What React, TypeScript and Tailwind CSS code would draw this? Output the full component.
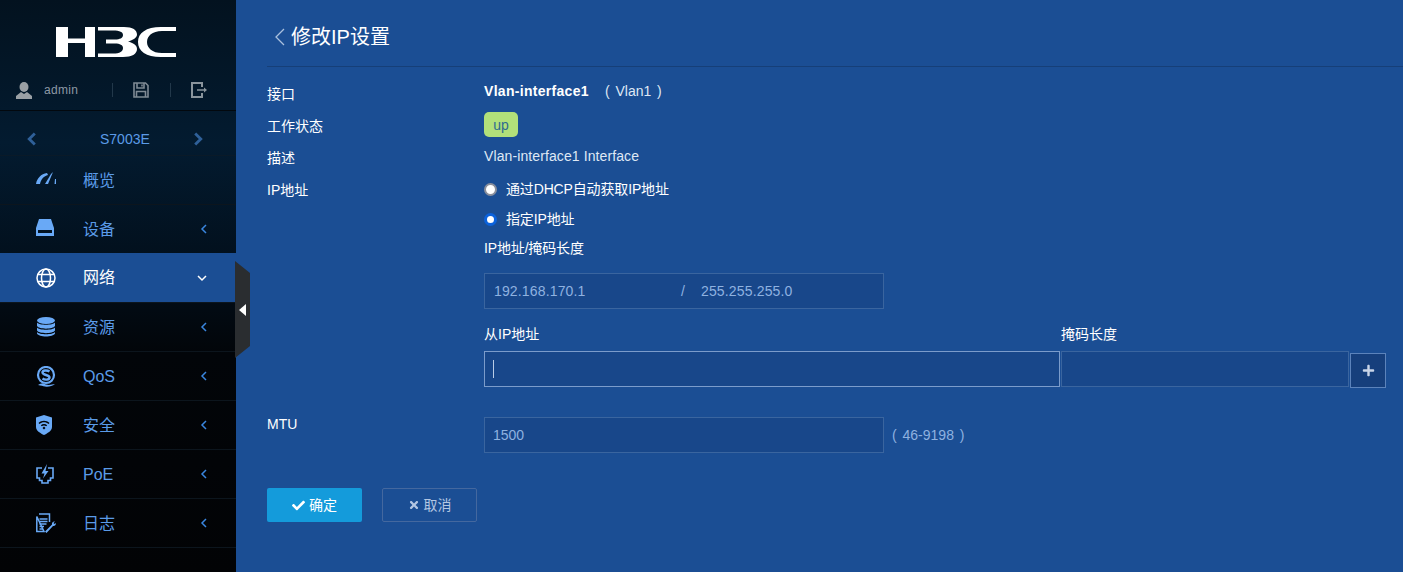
import React from 'react';
import { FaCheck, FaPlus, FaTimes } from 'react-icons/fa';

const font = { fontFamily: '"Liberation Sans", "Noto Sans CJK SC", sans-serif' };

const Gauge = () => (
  <svg className="mb-1" width="21" height="14" viewBox="0 0 21 14" fill="#69a9f6">
    <path d="M0 13 C1 7 5 3 11 2 L12 4 C8 5 5 8 4 13 Z" />
    <path d="M9 13 L15 3 L17 1 L12 13 Z" />
    <path d="M19 8 L20 8 L20 13 L18.500 13 Z" />
  </svg>
);

const Drive = () => (
  <svg className="mb-1" width="18" height="17" viewBox="0 0 18 17" fill="#69a9f6">
    <path fillRule="evenodd" d="M3 0 H15 L18 9 V17 H0 V9 Z M2 11 V14 H16 V11 Z" />
  </svg>
);

const Globe = () => (
  <svg width="20" height="20" viewBox="0 0 20 20" fill="none" stroke="currentColor" strokeWidth="1.500">
    <circle cx="10" cy="10" r="9" />
    <ellipse cx="10" cy="10" rx="4.500" ry="9" />
    <path d="M2 6.500 H18 M2 13.500 H18" />
  </svg>
);

const Database = () => (
  <svg width="20" height="20" viewBox="0 0 20 20" fill="#69a9f6">
    <ellipse cx="10" cy="3.500" rx="9" ry="3.500" />
    <path d="M1 5.500 C3 8.500 17 8.500 19 5.500 V9 C17 12.500 3 12.500 1 9 Z" />
    <path d="M1 10.500 C3 13.500 17 13.500 19 10.500 V13.500 C17 17 3 17 1 13.500 Z" />
    <path d="M1 15 C3 18 17 18 19 15 V16.500 C17 20.500 3 20.500 1 16.500 Z" />
  </svg>
);

const QosIcon = () => (
  <svg width="20" height="21" viewBox="0 0 20 21" fill="none" stroke="#69a9f6">
    <circle cx="10" cy="9" r="8" strokeWidth="2.200" />
    <path d="M13.500 5.500 C11 3.800 6.500 4.200 6.500 6.500 C6.500 9.300 13.500 8.700 13.500 11.500 C13.500 14 9 14.300 6.500 12.500" strokeWidth="2.400" />
    <path d="M2 19 C6 16.500 8 17.500 10 18.500 C13 19.500 16 18.500 19 18 C16 20.500 12 21 9 20.500 C7 20 5 19.500 2 19 Z" fill="#69a9f6" stroke="none" />
  </svg>
);

const Shield = () => (
  <svg width="16" height="20" viewBox="0 0 16 20" fill="#69a9f6">
    <path fillRule="evenodd" d="M8 0 L16 2.500 V12 C16 16 11 18.500 8 20 C5 18.500 0 16 0 12 V2.500 Z M2.500 8 C5.500 5 10.500 5 13.500 8 L12.500 9 C10 6.800 6 6.800 3.500 9 Z M4.800 10.300 C6.500 8.700 9.500 8.700 11.200 10.300 L10.200 11.300 C9 10.300 7 10.300 5.800 11.300 Z M8 11.500 L9.500 13 L8 14.500 L6.500 13 Z" />
  </svg>
);

const Poe = () => (
  <svg width="18" height="20" viewBox="0 0 18 20" fill="none" stroke="#69a9f6" strokeWidth="1.600">
    <path d="M6 4 H1 V14 H3.500 V16.500 H6 V19 H12 V16.500 H14.500 V14 H17 V4 H12" />
    <path d="M11 0 L5.500 9.500 H8.500 L7 14.500 L12.500 7 H9.500 Z" fill="#69a9f6" stroke="none" />
  </svg>
);

const LogIcon = () => (
  <svg width="20" height="20" viewBox="0 0 20 20" fill="none" stroke="#69a9f6">
    <path d="M3 1 H13.500 V9 M8 18.500 H0.800 V3.500 Z" strokeWidth="1.500" />
    <path d="M3.500 6 H11.500 M3.500 8.500 H11.500 M3.500 11 H10.500 M3.500 13.500 H8 M3.500 16 H7" strokeWidth="1.400" />
    <path d="M9 18.500 L16 11.500 C15.500 10 17 8 19 8.500 L17.500 10 L18.500 11 L20 10 C20 12 18.500 13.500 17 13 L10.500 20 Z" fill="#69a9f6" stroke="none" />
  </svg>
);

const Logo = () => (
  <svg width="120" height="30" viewBox="0 0 120 30" fill="#fff">
    <path d="M0 0 H12 V11.500 H29 V0 H39 V30 H29 V16 H12 V30 H0 Z" />
    <path d="M42 0 H68 C77 0 81 3 81 7.500 C81 11 77 13 72 14.500 C77 16 81 18 81 22 C81 27 76 30 67 30 H42 V26.500 H57 C64 26.500 67 24.500 67 21 C67 18 64 16.500 59 16.500 H50 V12.500 H59 C64 12.500 67 11 67 8 C67 5 64 3.500 57 3.500 H42 Z" />
    <path d="M120 0 V4 H106 C96 4 91 9 91 15 C91 21 96 26 106 26 H120 V30 H105 C90 30 82 24 82 15 C82 6 90 0 105 0 Z" />
  </svg>
);

const Person = () => (
  <svg width="16" height="17" viewBox="0 0 16 17" fill="#9aa0a5">
    <ellipse cx="8" cy="5" rx="4.500" ry="5" />
    <path d="M5 10 L0 14 V17 H16 V14 L11 10 L8 12 Z" />
  </svg>
);

const Save = () => (
  <svg width="16" height="16" viewBox="0 0 16 16" fill="none" stroke="#7f8a94" strokeWidth="1.600">
    <path d="M1 1 H12.500 L15 3.500 V15 H1 Z" />
    <path d="M4 1 V6 H11 V1 M9 2.500 V4.500 M3.500 15 V9.500 H12.500 V15" />
  </svg>
);

const Logout = () => (
  <svg width="16" height="16" viewBox="0 0 16 16" fill="none" stroke="#8a949c" strokeWidth="2">
    <path d="M11 5 V1 H1 V15 H11 V11" />
    <path d="M6 8 H14" strokeWidth="1.500" />
    <path d="M13 5.500 L16 8 L13 10.500 Z" fill="#8a949c" stroke="none" />
  </svg>
);

const Chevron = ({ dir, size = 10, color, width = 1.500 }: { dir: 'left' | 'right' | 'down'; size?: number; color: string; width?: number }) => {
  const d = dir === 'left' ? 'M7 1 L3 5 L7 9' : dir === 'right' ? 'M3 1 L7 5 L3 9' : 'M1 3 L5 7 L9 3';
  return (
    <svg width={size} height={size} viewBox="0 0 10 10" fill="none" stroke={color} strokeWidth={width}>
      <path d={d} />
    </svg>
  );
};

const menu = [
  { label: '概览', icon: <Gauge />, arrow: false },
  { label: '设备', icon: <Drive />, arrow: true },
  { label: '网络', icon: <Globe />, arrow: true, active: true },
  { label: '资源', icon: <Database />, arrow: true },
  { label: 'QoS', icon: <QosIcon />, arrow: true },
  { label: '安全', icon: <Shield />, arrow: true },
  { label: 'PoE', icon: <Poe />, arrow: true },
  { label: '日志', icon: <LogIcon />, arrow: true },
];

const Sidebar = () => (
  <aside className="relative w-[236px] shrink-0 bg-[linear-gradient(180deg,#03121f_0%,#031b30_25%,#02101d_45%,#020509_62%,#020305_100%)]">
    <div className="flex h-[111px] flex-col border-b border-[#02080e]">
      <div className="flex h-[72px] items-start pt-[27px] pl-[56px]">
        <Logo />
      </div>
      <div className="flex h-[36px] items-center pl-4">
        <Person />
        <span className="ml-[12px] w-[68px] text-xs tracking-[0.3px] text-[#8d99a5]">admin</span>
        <span className="h-[14px] w-px bg-[#22384a]" />
        <span className="ml-5"><Save /></span>
        <span className="ml-[21px] h-[14px] w-px bg-[#22384a]" />
        <span className="ml-5"><Logout /></span>
      </div>
    </div>
    <div className="flex h-[45px] items-center border-b border-[#0a1a28] pt-[12px] pl-[25px]">
      <Chevron dir="left" size={14} color="#2f6099" width={2} />
      <span className="ml-[61px] w-[50px] text-sm text-[#5b9be8]">S7003E</span>
      <span className="ml-[41px]">
        <Chevron dir="right" size={14} color="#2f6099" width={2} />
      </span>
    </div>
    <nav>
      {menu.map((item) => (
        <div
          key={item.label}
          className={
            item.active
              ? '-mt-px flex h-[50px] items-center border-b border-[#0c151d] bg-[#1b4e94] text-white'
              : 'flex h-[49px] items-center border-b border-[#0c151d] text-[#5b9be8]'
          }
        >
          <span className="flex w-[83px] justify-start pl-9">{item.icon}</span>
          <span className={item.active ? 'flex-1 text-base' : 'flex-1 pt-[2px] text-base'}>{item.label}</span>
          {item.arrow && (
            <span className={item.active ? 'mr-[29px]' : 'mr-[27px]'}>
              <Chevron
                dir={item.active ? 'down' : 'left'}
                color={item.active ? '#ffffff' : '#3a86df'}
              />
            </span>
          )}
        </div>
      ))}
    </nav>
    {/* collapse handle */}
    <div className="absolute top-[261px] left-[235px] flex h-[97px] w-[15px] items-center justify-center bg-[#2a2d30] [clip-path:polygon(0_0,100%_12px,100%_85px,0_100%)]">
      <span className="h-0 w-0 border-y-[6px] border-r-[7px] border-y-transparent border-r-white" />
    </div>
  </aside>
);

const Radio = ({ checked, label }: { checked?: boolean; label: string }) => (
  <label className="flex h-6 items-center text-sm text-white">
    <span
      className={
        checked
          ? 'h-[13px] w-[13px] rounded-full border-[3px] border-[#0b62dc] bg-white'
          : 'h-[13px] w-[13px] rounded-full border-2 border-[#8a8f9c] bg-white'
      }
    />
    <span className="ml-[9px] tracking-[-0.15px]">{label}</span>
  </label>
);

const fieldCls = 'h-9 border border-[#3a659f] bg-[#18478a] text-sm text-[#8fb2e0] outline-none';

export default function App() {
  return (
    <div className="flex h-[572px] w-[1403px] overflow-hidden bg-[#1b4e94]" style={font}>
      <Sidebar />
      <main className="flex-1">
        <header className="ml-[31px] flex h-[67px] items-center border-b border-[#163f78] pt-2 pl-2">
          <svg width="10" height="18" viewBox="0 0 10 18" fill="none" stroke="#a9c0de" strokeWidth="1.300">
            <path d="M9 1 L1 9 L9 17" />
          </svg>
          <h1 className="ml-[6px] text-xl font-normal text-white">修改IP设置</h1>
        </header>

        <div className="ml-[31px] mt-[11px] flex">
          <div className="w-[217px] text-sm text-white">
            <div className="flex h-8 items-center">接口</div>
            <div className="flex h-8 items-center">工作状态</div>
            <div className="flex h-8 items-center">描述</div>
            <div className="flex h-8 items-center">IP地址</div>
          </div>

          <div className="flex flex-col">
            <div className="flex h-[26px] items-center text-sm text-white">
              <span className="font-bold tracking-[0.3px]">Vlan-interface1</span>
              <span className="ml-4 whitespace-pre text-[#dfe8f4] [word-spacing:2px]">( Vlan1 )</span>
            </div>
            <span className="mt-2 flex h-[25px] w-[34px] items-center justify-center rounded-[5px] bg-[#b2e07a] text-sm text-[#2f6a8f]">
              up
            </span>
            <div className="mt-[7px] flex h-6 items-center text-sm tracking-[0.1px] text-[#dfe8f4]">Vlan-interface1 Interface</div>
            <div className="mt-[9px]"><Radio label="通过DHCP自动获取IP地址" /></div>
            <div className="mt-[6px]"><Radio checked label="指定IP地址" /></div>
            <div className="mt-[5px] flex h-6 items-center text-sm tracking-[-0.15px] text-white">IP地址/掩码长度</div>

            <div className={`mt-[13px] flex w-[400px] items-center pl-[9px] ${fieldCls}`}>
              <span className="w-[187px] tracking-[0.15px]">192.168.170.1</span>
              <span className="w-[20px]">/</span>
              <span className="tracking-[0.15px]">255.255.255.0</span>
            </div>

            <div className="mt-[13px] flex h-6 items-center text-sm text-white">
              <span className="w-[577px]">从IP地址</span>
              <span>掩码长度</span>
            </div>
            <div className="mt-[5px] flex items-start">
              <div className="flex h-9 w-[576px] items-center border border-[#7b9ccb] bg-[#18478a] pl-2">
                <span className="h-[18px] w-px bg-[#b9cce6]" />
              </div>
              <input readOnly className={`ml-px w-[288px] ${fieldCls}`} />
              <button className="mt-[2px] ml-px flex h-[35px] w-9 items-center justify-center border border-[#5c83bb] bg-[#163f7c] text-[#c9d5e8]">
                <FaPlus size={13} />
              </button>
            </div>
          </div>
        </div>

        <div className="ml-[31px] mt-[29px] flex">
          <div className="w-[217px] text-sm leading-[14px] text-white">MTU</div>
          <input readOnly value="1500" className={`w-[400px] px-2 ${fieldCls}`} />
          <span className="ml-[8px] flex h-9 items-center whitespace-pre text-sm text-[#8fb2e0] [word-spacing:2px]">( 46-9198 )</span>
        </div>

        <div className="ml-[31px] mt-[35px] flex gap-5">
          <button className="flex h-[34px] w-[95px] items-center justify-center gap-1 rounded-[2px] bg-[#149bdb] text-sm text-white">
            <FaCheck size={13} />
            确定
          </button>
          <button className="flex h-[34px] w-[95px] items-center justify-center gap-1 rounded-[2px] border border-[#44689f] text-sm text-[#b3c6e2]">
            <FaTimes size={12} />
            取消
          </button>
        </div>
      </main>
    </div>
  );
}
